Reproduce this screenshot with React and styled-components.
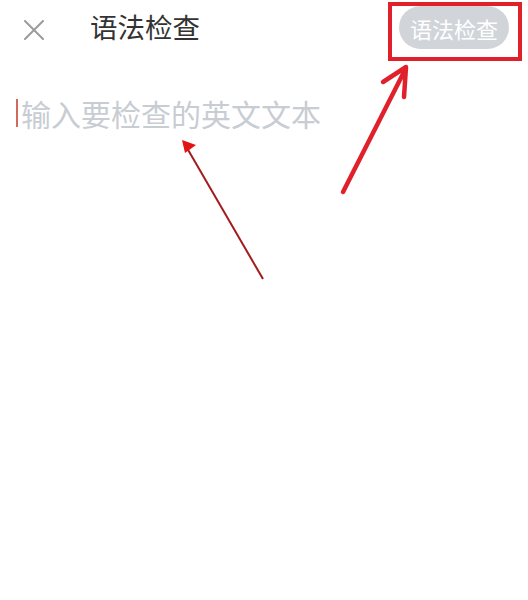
import React from "react";
import styled, { createGlobalStyle } from "styled-components";

const GlobalStyle = createGlobalStyle`
  html, body {
    margin: 0;
    padding: 0;
    background: #ffffff;
  }
  body {
    font-family: "Noto Sans CJK SC", "Noto Sans", sans-serif;
  }
`;

const Page = styled.div`
  position: relative;
  width: 528px;
  height: 600px;
  overflow: hidden;
  background: #ffffff;
`;

const Header = styled.div`
  display: flex;
  align-items: center;
  height: 57px;
  padding: 0 19px 0 24px;
`;

const CloseButton = styled.button`
  display: flex;
  align-items: center;
  justify-content: center;
  width: 20px;
  height: 20px;
  padding: 0;
  margin-top: 2px;
  border: none;
  background: none;
  color: #9b9b9b;
`;

const Title = styled.h1`
  margin: -3px 0 0 46px;
  flex: 1;
  font-size: 27.5px;
  font-weight: 400;
  line-height: 1;
  color: #333333;
`;

const CheckButton = styled.button`
  height: 43px;
  padding: 0 11px;
  margin-top: -2px;
  border: none;
  border-radius: 22px;
  background: #d1d5da;
  color: #ffffff;
  font-family: inherit;
  font-size: 22px;
  line-height: 1;
`;

const Editor = styled.div`
  display: flex;
  align-items: center;
  padding: 40px 0 0 16px;
  height: 32px;
`;

const Caret = styled.span`
  width: 2px;
  height: 28px;
  background: #d06a5a;
`;

const Placeholder = styled.span`
  margin-left: 3px;
  font-size: 30px;
  line-height: 1;
  color: #c8ccd3;
`;

const Annotations = styled.svg`
  position: absolute;
  left: 0;
  top: 0;
  pointer-events: none;
`;

const App = () => {
  return (
    <Page>
      <GlobalStyle />
      <Header>
        <CloseButton aria-label="关闭">
          <svg width="20" height="20" viewBox="0 0 20 20">
            <path d="M1 1 L19 19 M19 1 L1 19" stroke="currentColor" strokeWidth="2" strokeLinecap="round" />
          </svg>
        </CloseButton>
        <Title>语法检查</Title>
        <CheckButton>语法检查</CheckButton>
      </Header>
      <Editor>
        <Caret />
        <Placeholder>输入要检查的英文文本</Placeholder>
      </Editor>

      <Annotations width="528" height="600" viewBox="0 0 528 600">
        {/* highlight box round the button */}
        <rect x="390" y="4" width="130" height="55" fill="none" stroke="#e0212b" strokeWidth="4" />
        {/* hand-drawn arrow to the button */}
        <path
          d="M343 192 L406 68 M383 82 L406 67 L404 97"
          fill="none"
          stroke="#e0212b"
          strokeWidth="4.5"
          strokeLinecap="round"
          strokeLinejoin="round"
        />
        {/* thin arrow to the placeholder */}
        <line x1="263" y1="279" x2="187" y2="148" stroke="#a31c1c" strokeWidth="2" />
        <polygon points="182,140 196,145 185,153" fill="#e31414" />
      </Annotations>
    </Page>
  );
};

export default App;
